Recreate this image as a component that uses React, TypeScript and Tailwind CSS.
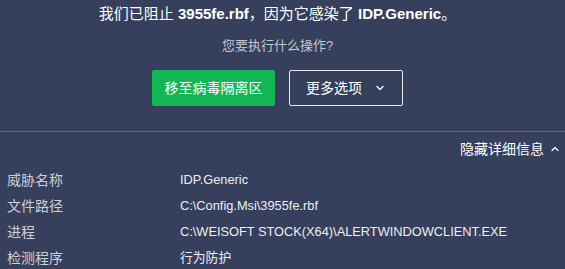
import { ChevronDown, ChevronUp } from 'lucide-react';

const details = [
  { label: '威胁名称', value: 'IDP.Generic' },
  { label: '文件路径', value: 'C:\\Config.Msi\\3955fe.rbf' },
  { label: '进程', value: 'C:\\WEISOFT STOCK(X64)\\ALERTWINDOWCLIENT.EXE' },
  { label: '检测程序', value: '行为防护' },
];

export default function App() {
  return (
    <div
      className="w-[565px] h-[269px] overflow-hidden bg-[#363f5b] text-white"
      style={{ fontFamily: '"Liberation Sans", "Noto Sans CJK SC", sans-serif' }}
    >
      {/* Top: message and actions */}
      <div className="flex flex-col items-center pt-[4px] pr-[10px]">
        <p className="text-[15px] leading-[20px] text-white">
          我们已阻止 <span className="font-bold">3955fe.rbf</span>，因为它感染了{' '}
          <span className="font-bold">IDP.Generic</span>。
        </p>
        <p className="mt-[12px] text-[13px] leading-[20px] text-[#c3c7d2]">您要执行什么操作?</p>
        <div className="mt-[14px] flex gap-[14px]">
          <button className="h-[36px] w-[123px] rounded-[2px] bg-[#12b655] text-[14px] text-white">
            移至病毒隔离区
          </button>
          <button className="flex h-[36px] w-[114px] items-center rounded-[2px] border border-[#e6e8ee] pl-[16px] text-[14px] text-white">
            更多选项
            <ChevronDown className="ml-[12px] h-[12px] w-[12px]" strokeWidth={2.5} />
          </button>
        </div>
      </div>

      <div className="mt-[25px] border-t border-[#5b6482]" />

      {/* Details */}
      <div className="flex justify-end pt-[7px] pr-[4px]">
        <button className="flex items-center text-[14px] leading-[20px] text-white">
          隐藏详细信息
          <ChevronUp className="ml-[5px] h-[12px] w-[12px]" strokeWidth={2.5} />
        </button>
      </div>

      <div className="mt-[8px] flex flex-col">
        {details.map((row) => (
          <div key={row.label} className="flex h-[26px] items-center">
            <span className="w-[180px] pl-[7px] text-[14px] text-[#cdd0d9]">{row.label}</span>
            <span className="text-[12.8px] text-[#eceef2]">{row.value}</span>
          </div>
        ))}
      </div>
    </div>
  );
}
